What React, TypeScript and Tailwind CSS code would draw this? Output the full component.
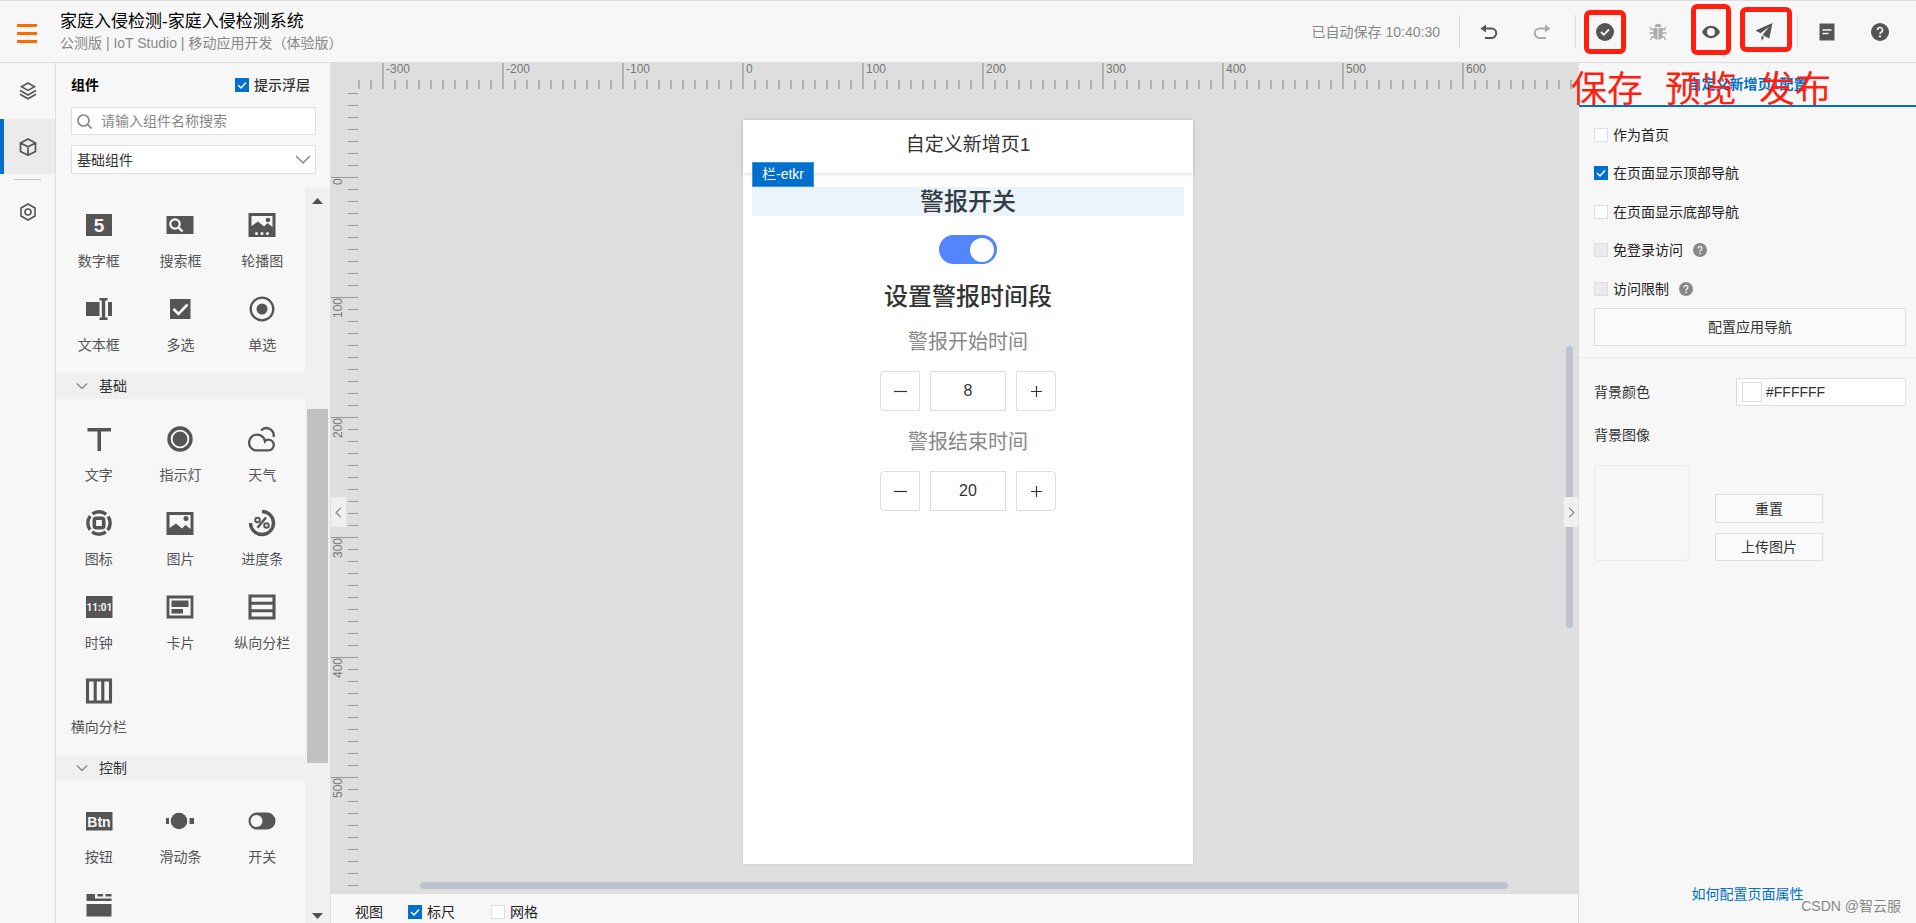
import { useState } from 'react'
import type { ReactNode } from 'react'

interface CheckProps {
  label: string
  checked: boolean
  onChange?: (checked: boolean) => void
  disabled?: boolean
  className?: string
}

interface Component {
  name: string
  icon: ReactNode
}

interface Group {
  title?: string
  items: Component[]
}

const fontStack = "font-['Liberation_Sans','Noto_Sans_CJK_SC',sans-serif]"

const Icon = ({ children }: { children: ReactNode }) => (
  <svg className="h-7 w-7" viewBox="0 0 28 28" fill="#555" aria-hidden="true">
    {children}
  </svg>
)

const groups: Group[] = [
  {
    items: [
      {
        name: '数字框',
        icon: (
          <Icon>
            <path d="M1 3h26v22H1z" />
            <text x="14" y="21" textAnchor="middle" fontSize="19" fontWeight="700" fill="#f7f7f7">5</text>
          </Icon>
        ),
      },
      {
        name: '搜索框',
        icon: (
          <Icon>
            <path d="M.5 5h27v18H.5z" />
            <circle cx="9" cy="13" r="4.7" fill="none" stroke="#f7f7f7" strokeWidth="2.2" />
            <path d="M12.500 16.500l4 4" stroke="#f7f7f7" strokeWidth="2.400" />
          </Icon>
        ),
      },
      {
        name: '轮播图',
        icon: (
          <Icon>
            <path d="M.5 2h27v24H.5z" />
            <path d="M3.500 5h21v11l-5-4-3.500 3.500-6-5L3.500 15z" fill="#f7f7f7" />
            <circle cx="20" cy="9" r="2.300" />
            <circle cx="8.500" cy="22.500" r="1.500" fill="#f7f7f7" />
            <circle cx="14" cy="22.500" r="1.500" fill="#f7f7f7" />
            <circle cx="19.500" cy="22.500" r="1.500" fill="#f7f7f7" />
          </Icon>
        ),
      },
      {
        name: '文本框',
        icon: (
          <Icon>
            <path d="M1 7h13.500v14H1zM23 7h4v14h-4z" />
            <path d="M14.500 3h8v2.500h-2.300v17h2.300V25h-8v-2.500h2.300v-17h-2.300z" />
          </Icon>
        ),
      },
      {
        name: '多选',
        icon: (
          <Icon>
            <path d="M4 4h20.500v20H4z" />
            <path d="M7.500 14l5 5 9-9.500" fill="none" stroke="#f7f7f7" strokeWidth="2.600" />
          </Icon>
        ),
      },
      {
        name: '单选',
        icon: (
          <Icon>
            <circle cx="14" cy="14" r="11.300" fill="none" stroke="#555" strokeWidth="2.300" />
            <circle cx="14" cy="14" r="5.500" />
          </Icon>
        ),
      },
    ],
  },
  {
    title: '基础',
    items: [
      {
        name: '文字',
        icon: (
          <Icon>
            <path d="M2.500 3h23.500v3.500H16V26h-3.500V6.500h-10z" />
          </Icon>
        ),
      },
      {
        name: '指示灯',
        icon: (
          <Icon>
            <circle cx="14" cy="14" r="11" fill="none" stroke="#555" strokeWidth="3.400" />
            <circle cx="14" cy="14" r="7.400" />
          </Icon>
        ),
      },
      {
        name: '天气',
        icon: (
          <Icon>
            <path
              d="M7 25.300h13.500a5.300 5.300 0 0 0 0-10.600c-1.300 0-2.700.5-3.500 1.500a8 8 0 1 0-10 9.100zM17 16.500c-.2-1.200-.6-2.200-1.200-3.100M13 5.500a7.300 7.300 0 0 1 12.500 6.500"
              fill="none"
              stroke="#555"
              strokeWidth="2.300"
            />
          </Icon>
        ),
      },
      {
        name: '图标',
        icon: (
          <Icon>
            <circle cx="14" cy="14" r="11.200" fill="none" stroke="#555" strokeWidth="3.400" strokeDasharray="14.600 3" strokeDashoffset="-1.500" transform="rotate(45 14 14)" />
            <rect x="9.300" y="9.300" width="9.400" height="9.400" rx="2" fill="none" stroke="#555" strokeWidth="3.600" />
          </Icon>
        ),
      },
      {
        name: '图片',
        icon: (
          <Icon>
            <path d="M.5 3h27v23H.5z" />
            <path d="M3.500 6h21v14l-5-4-3.500 3.500-6-5L3.500 19z" fill="#f7f7f7" />
            <circle cx="20" cy="9.500" r="2.500" />
          </Icon>
        ),
      },
      {
        name: '进度条',
        icon: (
          <Icon>
            <path d="M14 2.500A11.500 11.500 0 1 1 2.500 14" fill="none" stroke="#555" strokeWidth="3.400" />
            <circle cx="9.500" cy="11" r="2.300" fill="none" stroke="#555" strokeWidth="2" />
            <circle cx="18.500" cy="16.500" r="2.300" fill="none" stroke="#555" strokeWidth="2" />
            <path d="M9.500 18.800L18 8.500" stroke="#555" strokeWidth="2.400" />
          </Icon>
        ),
      },
      {
        name: '时钟',
        icon: (
          <Icon>
            <path d="M1 3h26.500v22H1z" />
            <text x="14.300" y="17.500" textAnchor="middle" fontFamily="Roboto" fontSize="10" fontWeight="700" fill="#f7f7f7">
              11:01
            </text>
          </Icon>
        ),
      },
      {
        name: '卡片',
        icon: (
          <Icon>
            <path d="M2 4h24v20H2z" fill="none" stroke="#555" strokeWidth="2.800" />
            <path d="M5.500 7.500h17V14h-17zM5.500 16h11.500v4.500H5.500z" />
          </Icon>
        ),
      },
      {
        name: '纵向分栏',
        icon: (
          <Icon>
            <path d="M2 3h24v22H2zM2 10.300h24M2 17.700h24" fill="none" stroke="#555" strokeWidth="3.100" />
          </Icon>
        ),
      },
      {
        name: '横向分栏',
        icon: (
          <Icon>
            <path d="M2.500 3h23v22h-23zM10.200 3v22M17.800 3v22" fill="none" stroke="#555" strokeWidth="3.100" />
          </Icon>
        ),
      },
    ],
  },
  {
    title: '控制',
    items: [
      {
        name: '按钮',
        icon: (
          <Icon>
            <path d="M1 5h26.500v18.500H1z" />
            <text x="14" y="19.500" textAnchor="middle" fontSize="14" fontWeight="700" fill="#f7f7f7">Btn</text>
          </Icon>
        ),
      },
      {
        name: '滑动条',
        icon: (
          <Icon>
            <circle cx="13" cy="14" r="8.300" />
            <path d="M0 11h3v6H0zM23.500 11h4.500v6h-4.500z" />
          </Icon>
        ),
      },
      {
        name: '开关',
        icon: (
          <Icon>
            <rect x=".5" y="5.500" width="27" height="17" rx="8.500" />
            <circle cx="8.500" cy="14" r="6" fill="#f7f7f7" />
          </Icon>
        ),
      },
      {
        name: '',
        icon: (
          <Icon>
            <path d="M1.500 3H10v4.500h16.500V10h-25zM12.500 3h5.500v2.500h-5.500zM20.500 3h6v2.500h-6zM1.500 13h25v12.500h-25z" />
          </Icon>
        ),
      },
    ],
  },
]

const Check = ({ label, checked, onChange, disabled, className = '' }: CheckProps) => (
  <label className={`flex items-center gap-[5px] text-sm leading-5 ${className}`}>
    <span className="relative flex h-[14px] w-[14px]">
      <input
        type="checkbox"
        checked={checked}
        disabled={disabled}
        onChange={(e) => onChange?.(e.target.checked)}
        className="h-[14px] w-[14px] appearance-none border border-[#dedede] bg-white checked:border-[#0070cc] checked:bg-[#0070cc] disabled:bg-[#ebebeb]"
      />
      {checked && (
        <svg className="pointer-events-none absolute inset-0 h-[14px] w-[14px]" viewBox="0 0 14 14" fill="none">
          <path d="M3 7l3 3 5-5.500" stroke="#fff" strokeWidth="1.500" />
        </svg>
      )}
    </span>
    {label}
  </label>
)

const Chevron = ({ className, d }: { className: string; d: string }) => (
  <svg className={className} viewBox="0 0 14 14" fill="none" stroke="currentColor" strokeWidth="1.500" aria-hidden="true">
    <path d={d} />
  </svg>
)

const HelpIcon = ({ className }: { className: string }) => (
  <svg className={className} viewBox="0 0 18 18" aria-hidden="true">
    <circle cx="9" cy="9" r="9" fill="currentColor" />
    <path d="M6.500 7a2.500 2.500 0 1 1 3.700 2.200c-.9.500-1.200.8-1.200 1.800" fill="none" stroke="#f7f7f7" strokeWidth="1.600" />
    <circle cx="9" cy="13.300" r="1.100" fill="#f7f7f7" />
  </svg>
)

const Divider = () => <span className="mr-[2px] ml-[7px] h-[33px] w-px bg-[#dedede]" />

interface ToolProps {
  title: string
  children: ReactNode
  muted?: boolean
  mark?: string
}

const Tool = ({ title, children, muted, mark }: ToolProps) => (
  <button
    aria-label={title}
    className={`relative flex h-full w-[53px] items-center justify-center ${muted ? 'text-[#aaa]' : 'text-[#555]'}`}
  >
    {children}
    {mark && <span className={`absolute rounded-md border-[5px] border-[#ff1e10] ${mark}`} />}
  </button>
)

const Header = () => (
  <header className="flex h-[63px] shrink-0 items-center border-y border-[#dedede] pr-[10px]">
    <button aria-label="菜单" className="ml-[17px] flex w-5 flex-col gap-[5px] pt-[3px]">
      <span className="h-[3px] w-5 bg-[#ff6a00]" />
      <span className="h-[3px] w-5 bg-[#ff6a00]" />
      <span className="h-[3px] w-5 bg-[#ff6a00]" />
    </button>
    <div className="ml-[23px] pb-[2px]">
      <h1 className="text-[17px] leading-6 text-black">家庭入侵检测-家庭入侵检测系统</h1>
      <p className="text-sm leading-[18px] text-[#888]">公测版 | IoT Studio | 移动应用开发（体验版）</p>
    </div>
    <div className="ml-auto flex h-full items-center">
      <span className="mr-3 text-sm text-[#888]">已自动保存 10:40:30</span>
      <Divider />
      <Tool title="撤销">
        <svg className="h-[18px] w-[18px]" viewBox="0 0 18 18" fill="none" stroke="currentColor" strokeWidth="2">
          <path d="M3 5.500h8.500a4.700 4.700 0 0 1 0 9.500H5" />
          <path d="M6 1.500v8L.5 5.500z" fill="currentColor" stroke="none" />
        </svg>
      </Tool>
      <Tool title="重做" muted>
        <svg className="h-[18px] w-[18px]" viewBox="0 0 18 18" fill="none" stroke="currentColor" strokeWidth="2">
          <path d="M15 5.500H6.500a4.700 4.700 0 0 0 0 9.500H13" />
          <path d="M12 1.500v8l5.500-4z" fill="currentColor" stroke="none" />
        </svg>
      </Tool>
      <Divider />
      <Tool title="保存" mark="top-[9px] left-[6px] h-[44px] w-[42px]">
        <svg className="h-[18px] w-[18px]" viewBox="0 0 18 18" fill="none">
          <circle cx="9" cy="9" r="9" fill="currentColor" />
          <path d="M5 9l2.800 2.800L13 6.500" stroke="#f7f7f7" strokeWidth="1.800" />
        </svg>
      </Tool>
      <Tool title="调试" muted>
        <svg className="h-[18px] w-[18px]" viewBox="0 0 18 18" fill="currentColor">
          <path d="M5.800 4a3.200 3.200 0 0 1 6.400 0zM4.500 5h4v12C6 16.500 4.500 14.500 4.500 12zM9.500 5h4v7c0 2.500-1.500 4.500-4 5z" />
          <path d="M1 4l1.500 2.500h3M17 4l-1.500 2.500h-3M.5 10h5M17.500 10h-5M1.500 17l1.500-3h3M16.500 17L15 14h-3" fill="none" stroke="currentColor" strokeWidth="1.300" />
        </svg>
      </Tool>
      <Tool title="预览" mark="top-[3px] left-[7px] h-[51px] w-10">
        <svg className="h-[18px] w-[18px]" viewBox="0 0 18 18" fill="currentColor">
          <path fillRule="evenodd" d="M0 9c2-4 5.300-6.200 9-6.200S16 5 18 9c-2 4-5.300 6.200-9 6.200S2 13 0 9zm9-4a4 4 0 1 0 0 8 4 4 0 0 0 0-8z" />
        </svg>
      </Tool>
      <Tool title="发布" mark="top-[6px] left-[3px] h-[45px] w-[52px]">
        <svg className="h-[18px] w-[18px]" viewBox="0 0 18 18" fill="currentColor">
          <path d="M17.500 0L.5 7.500l5 2.800L14 4l-6.500 8 6.800 3.500zM6.500 12.500V18l2.700-3.800z" />
        </svg>
      </Tool>
      <Divider />
      <Tool title="文档">
        <svg className="h-[18px] w-[18px]" viewBox="0 0 18 18">
          <path d="M1.500.5h15v17h-15z" fill="currentColor" />
          <path d="M4.500 7h9M4.500 10.500h6" stroke="#f7f7f7" strokeWidth="1.600" />
        </svg>
      </Tool>
      <Tool title="帮助">
        <HelpIcon className="h-[18px] w-[18px]" />
      </Tool>
    </div>
  </header>
)

const Rail = () => (
  <nav className="flex w-14 shrink-0 flex-col items-center border-r border-[#dedede] text-[#555]">
    <button aria-label="页面" className="flex h-14 w-full items-center justify-center">
      <svg className="h-[18px] w-[18px]" viewBox="0 0 18 18" fill="none" stroke="currentColor" strokeWidth="1.600">
        <path d="M9 1l6.500 3.700L9 8.400 2.500 4.700zM1 8.500l8 4.500 8-4.500M1 12.300l8 4.500 8-4.500" />
      </svg>
    </button>
    <button aria-label="组件" className="flex h-[55px] w-full items-center justify-center border-l-4 border-[#0070cc] bg-[#ebebeb] pr-1">
      <svg className="h-[18px] w-[18px]" viewBox="0 0 18 18" fill="none" stroke="currentColor" strokeWidth="1.700">
        <path d="M9 1l7.500 4v8.500L9 17.200l-7.500-3.700V5zM1.500 5L9 8.800 16.500 5M9 8.800v8.400" />
      </svg>
    </button>
    <span className="mt-[5px] h-px w-[27px] bg-[#c4c4c4]" />
    <button aria-label="设置" className="mt-1 flex h-14 w-full items-center justify-center">
      <svg className="h-[18px] w-[18px]" viewBox="0 0 18 18" fill="none" stroke="currentColor" strokeWidth="1.600">
        <path d="M9 1l7 4v8l-7 4-7-4V5z" />
        <circle cx="9" cy="9" r="3" />
      </svg>
    </button>
  </nav>
)

const ComponentPanel = () => {
  const [tips, setTips] = useState(true)
  const [keyword, setKeyword] = useState('')

  return (
    <aside className="flex w-[275px] shrink-0 flex-col border-r border-[#dedede]">
      <div className="flex flex-col pr-[14px] pb-[14px] pl-[15px]">
        <div className="flex h-11 items-center justify-between pr-[6px]">
          <h2 className="text-sm font-bold text-black">组件</h2>
          <Check label="提示浮层" checked={tips} onChange={setTips} className="font-medium text-[#333]" />
        </div>
        <label className="flex h-7 items-center border border-[#dedede] bg-white pl-[5px] text-[#888]">
          <svg className="h-[15px] w-[15px]" viewBox="0 0 15 15" fill="none" stroke="currentColor" strokeWidth="1.700">
            <circle cx="6.500" cy="6.500" r="5.500" />
            <path d="M10.500 10.500l4 4" />
          </svg>
          <input
            type="text"
            aria-label="搜索组件"
            value={keyword}
            onChange={(e) => setKeyword(e.target.value)}
            placeholder="请输入组件名称搜索"
            className="ml-[9px] min-w-0 flex-1 text-sm outline-none placeholder:text-[#888]"
          />
        </label>
        <div className="relative mt-[10px] flex">
          <select aria-label="组件分类" className="h-[29px] w-full appearance-none border border-[#dedede] bg-white px-[5px] text-sm text-[#333]">
            <option>基础组件</option>
          </select>
          <Chevron className="pointer-events-none absolute top-[7px] right-[6px] h-[14px] w-[14px] text-[#888]" d="M0 4l7 7 7-7" />
        </div>
      </div>
      <div className="flex min-h-0 flex-1">
        <div className="min-w-0 flex-1 overflow-hidden">
          {groups.map((group) => (
            <section key={group.title ?? 'form'}>
              {group.title && (
                <h3 className="flex h-[26px] items-center gap-[11px] bg-[#f0f0f0] pl-5 text-sm text-[#333]">
                  <Chevron className="h-3 w-3 text-[#888]" d="M1 4l6 6 6-6" />
                  {group.title}
                </h3>
              )}
              <div className={`grid grid-cols-3 px-[2px] pb-[10px] ${group.title ? 'pt-[10px]' : 'pt-[7px]'}`}>
                {group.items.map((item) => (
                  <button key={item.name} className="flex h-[84px] flex-col items-center pt-4 text-sm leading-5 text-[#555]">
                    {item.icon}
                    <span className="mt-3">{item.name}</span>
                  </button>
                ))}
              </div>
            </section>
          ))}
        </div>
        <div className="flex w-[25px] flex-col items-center justify-between bg-[#f0f0f0] pt-[10px] pb-1">
          <svg className="h-[6px] w-[11px]" viewBox="0 0 11 6" fill="#505050"><path d="M0 6l5.500-6L11 6z" /></svg>
          <div className="flex w-[21px] flex-1 flex-col py-1">
            <span className="flex-[200]" />
            <span className="flex-[353] bg-[#c1c1c1]" />
            <span className="flex-[145]" />
          </div>
          <svg className="h-[6px] w-[11px]" viewBox="0 0 11 6" fill="#505050"><path d="M0 0l5.500 6L11 0z" /></svg>
        </div>
      </div>
    </aside>
  )
}

// one tick stands for ten units, the first ticks lie before the origin
const columns = Array.from({ length: 102 }, (_, i) => (i - 32) * 10)
const rows = Array.from({ length: 67 }, (_, i) => (i - 7) * 10)

const TopRuler = () => (
  <div className="flex h-[26px] items-end overflow-hidden pl-[27px] text-xs leading-3 text-[#777]">
    {columns.map((n) => (
      <span
        key={n}
        className={`w-3 shrink-0 border-l-2 border-[#b0b0b0] pl-[2px] whitespace-nowrap ${n % 100 === 0 ? 'h-[26px]' : 'h-[9px]'}`}
      >
        {n % 100 === 0 && n}
      </span>
    ))}
  </div>
)

const SideRuler = () => (
  <div className="flex w-[27px] shrink-0 flex-col items-end overflow-hidden pt-1 text-xs leading-3 text-[#777]">
    {rows.map((n) => (
      <span key={n} className={`flex h-3 shrink-0 border-t border-[#999] pl-px ${n % 100 === 0 ? 'w-[27px]' : 'w-[10px]'}`}>
        {n % 100 === 0 && <span className="h-7 rotate-180 text-right whitespace-nowrap [writing-mode:vertical-rl]">{n}</span>}
      </span>
    ))}
  </div>
)

const Stepper = ({ label, initial }: { label: string; initial: number }) => {
  const [value, setValue] = useState(initial)
  const button = 'flex h-10 w-10 items-center justify-center border border-[#dedede] text-[#333]'

  return (
    <div className="mt-4 flex flex-col items-center">
      <p className="text-xl leading-[30px] text-[#888]">{label}</p>
      <div className="mt-[14px] flex gap-[10px]">
        <button aria-label={`${label}减少`} onClick={() => setValue(value - 1)} className={`${button} rounded-l`}>
          <svg className="h-[13px] w-[13px]" viewBox="0 0 13 13" stroke="currentColor" strokeWidth="1.200"><path d="M0 6.500h13" /></svg>
        </button>
        <input
          type="text"
          aria-label={label}
          value={value}
          onChange={(e) => setValue(Number(e.target.value) || 0)}
          className="h-10 w-[76px] border border-[#dedede] text-center text-base text-[#333] outline-none"
        />
        <button aria-label={`${label}增加`} onClick={() => setValue(value + 1)} className={`${button} rounded-r`}>
          <svg className="h-[13px] w-[13px]" viewBox="0 0 13 13" stroke="currentColor" strokeWidth="1.200"><path d="M1 6.500h11M6.500 1v11" /></svg>
        </button>
      </div>
    </div>
  )
}

const Phone = () => {
  const [on, setOn] = useState(true)

  return (
    <div className="mb-[30px] flex w-[450px] flex-col bg-white shadow-[0_0_3px_rgba(0,0,0,0.1)]">
      <h2 className="flex h-[53px] items-center justify-center pb-[2px] text-[19px] text-[#333] shadow-[0_1px_4px_rgba(0,0,0,0.15)]">自定义新增页1</h2>
      <div className="flex flex-col items-center px-[9px] pt-[14px]">
        <div className="relative w-full bg-[#ebf3fb] text-center text-2xl leading-[29px] font-medium text-[#333b44]">
          <span className="absolute bottom-full left-0 h-[25px] border border-[#3d97e0] bg-[#0070cc] px-[9px] text-sm leading-[23px] font-normal text-white">栏-etkr</span>
          警报开关
        </div>
        <button
          role="switch"
          aria-checked={on}
          aria-label="警报开关"
          onClick={() => setOn(!on)}
          className={`mt-[19px] flex h-[29px] w-[58px] items-center rounded-full px-[3px] ${on ? 'justify-end bg-[#5584ff]' : 'bg-[#ccc]'}`}
        >
          <span className="h-6 w-6 rounded-full bg-white" />
        </button>
        <h3 className="mt-[18px] text-2xl leading-[29px] font-medium text-[#333]">设置警报时间段</h3>
        <Stepper label="警报开始时间" initial={8} />
        <Stepper label="警报结束时间" initial={20} />
      </div>
    </div>
  )
}

const Workspace = () => {
  const [ruler, setRuler] = useState(true)
  const [grid, setGrid] = useState(false)

  return (
    <main className="flex min-w-0 flex-1 flex-col">
      <div className="relative flex min-h-0 flex-1 flex-col bg-[#dedede]">
        <TopRuler />
        <div className="flex min-h-0 flex-1">
          <SideRuler />
          <div className="flex min-w-0 flex-1 justify-center pt-[31px]">
            <Phone />
          </div>
        </div>
        <span className="absolute right-[5px] top-[34%] h-[34%] w-[7px] rounded-full bg-[#bcc3cc]" />
        <span className="absolute right-[70px] bottom-[5px] left-[89px] h-[7px] rounded-full bg-[#bcc3cc]" />
        <button aria-label="收起组件面板" className="absolute top-[434px] left-0 flex h-[30px] w-[15px] items-center justify-center bg-[#f0f0f0] text-[#888]">
          <Chevron className="h-[11px] w-[11px]" d="M10 1L4 7l6 6" />
        </button>
        <button aria-label="收起配置面板" className="absolute top-[434px] right-0 flex h-[30px] w-[14px] items-center justify-center bg-[#f0f0f0] text-[#888]">
          <Chevron className="h-[11px] w-[11px]" d="M4 1l6 6-6 6" />
        </button>
      </div>
      <footer className="flex h-[29px] shrink-0 items-center pt-[6px] pl-6 text-sm text-[#222]">
        <span>视图</span>
        <Check label="标尺" checked={ruler} onChange={setRuler} className="ml-[25px]" />
        <Check label="网格" checked={grid} onChange={setGrid} className="ml-9" />
      </footer>
    </main>
  )
}

const ConfigPanel = () => {
  const [home, setHome] = useState(false)
  const [top, setTop] = useState(true)
  const [bottom, setBottom] = useState(false)
  const [color, setColor] = useState('#FFFFFF')

  return (
    <aside className="flex w-[338px] shrink-0 flex-col border-l border-[#dedede] text-sm text-[#333]">
      <h2 className="flex h-11 items-center justify-center border-b-2 border-[#0070cc] pb-px font-bold text-[#0070cc]">自定义新增页1配置</h2>
      <div className="flex flex-col border-b border-[#e8e8e8] pt-[9px] pr-[10px] pb-[11px] pl-[15px] text-[#222]">
        <Check label="作为首页" checked={home} onChange={setHome} className="h-[38px]" />
        <Check label="在页面显示顶部导航" checked={top} onChange={setTop} className="h-[38px]" />
        <Check label="在页面显示底部导航" checked={bottom} onChange={setBottom} className="h-[39px]" />
        <div className="flex items-center gap-[10px]">
          <Check label="免登录访问" checked={false} disabled className="h-[38px]" />
          <HelpIcon className="h-[14px] w-[14px] text-[#888]" />
        </div>
        <div className="flex items-center gap-[10px]">
          <Check label="访问限制" checked={false} disabled className="h-[39px]" />
          <HelpIcon className="h-[14px] w-[14px] text-[#888]" />
        </div>
        <button className="h-[38px] border border-[#dedede] bg-[#fafafa] text-[#333]">配置应用导航</button>
      </div>
      <div className="pt-5 pr-[10px] pl-[15px]">
        <div className="flex items-center justify-between">
          <label htmlFor="bg-color">背景颜色</label>
          <div className="flex h-7 w-[170px] items-center gap-1 border border-[#dedede] bg-white pl-[5px]">
            <span className="h-5 w-5 border border-[#dedede]" />
            <input id="bg-color" type="text" value={color} onChange={(e) => setColor(e.target.value)} className="min-w-0 flex-1 outline-none" />
          </div>
        </div>
        <p className="mt-[19px] leading-5">背景图像</p>
        <div className="mt-5 flex items-end gap-[25px]">
          <div className="h-24 w-24 rounded border border-[#e8eaed]" />
          <div className="flex flex-col gap-[10px]">
            <button className="h-[29px] w-[108px] border border-[#dedede] bg-[#fafafa]">重置</button>
            <button className="h-[28px] w-[108px] border border-[#dedede] bg-[#fafafa]">上传图片</button>
          </div>
        </div>
      </div>
      <a href="#help" className="mt-auto mb-[19px] self-center leading-5 text-[#0070cc]">
        如何配置页面属性
      </a>
    </aside>
  )
}

export default function App() {
  return (
    <div className={`relative flex h-screen flex-col overflow-hidden bg-[#f7f7f7] ${fontStack}`}>
      <Header />
      <div className="flex min-h-0 flex-1">
        <Rail />
        <ComponentPanel />
        <Workspace />
        <ConfigPanel />
      </div>
      <div className="pointer-events-none absolute top-[72px] right-[85px] flex gap-[22px] text-4xl leading-9 text-[#ff1e10]">
        <span>保存</span>
        <span>预览</span>
        <span>发布</span>
      </div>
      <span className="pointer-events-none absolute right-[15px] bottom-[7px] text-sm leading-5 text-[#888]">CSDN @智云服</span>
    </div>
  )
}
